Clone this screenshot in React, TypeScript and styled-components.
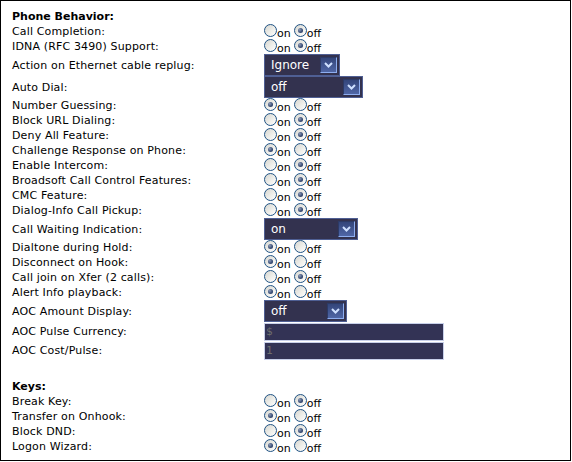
import { createGlobalStyle } from "styled-components";
import styled from "styled-components";

const GlobalStyle = createGlobalStyle`
  body {
    margin: 0;
    background: #ffffff;
  }
`;

const Panel = styled.div`
  box-sizing: border-box;
  width: 571px;
  height: 461px;
  border: 1px solid #000000;
  padding: 8px 0 0 11px;
  font-family: "DejaVu Sans", Verdana, sans-serif;
  font-size: 11px;
  letter-spacing: 0.15px;
  color: #000000;
  background: #ffffff;
`;

const Heading = styled.div<{ $gap?: number }>`
  height: 15px;
  line-height: 15px;
  font-weight: bold;
  letter-spacing: 0;
  margin-top: ${props => props.$gap ?? 0}px;
`;

const Row = styled.div<{ $height: number }>`
  display: grid;
  grid-template-columns: 252px 1fr;
  align-items: center;
  height: ${props => props.$height}px;
`;

const Label = styled.span`
  white-space: nowrap;
  line-height: 15px;
`;

const RadioGroup = styled.div`
  display: flex;
  align-items: center;
  height: 15px;
  letter-spacing: 0;
`;

const Choice = styled.label`
  display: flex;
  align-items: center;
  margin-right: 3px;
  line-height: 15px;
`;

const RadioDot = styled.span<{ $checked: boolean }>`
  position: relative;
  box-sizing: border-box;
  display: inline-block;
  width: 13px;
  height: 13px;
  border-radius: 50%;
  border: 1px solid #1f5283;
  background: linear-gradient(135deg, #d6d6d0 0%, #eeeeea 55%, #ffffff 100%);
  margin-top: -2px;

  &::after {
    content: "";
    display: ${props => (props.$checked ? "block" : "none")};
    position: absolute;
    left: 3px;
    top: 3px;
    width: 5px;
    height: 5px;
    border-radius: 50%;
    background: radial-gradient(circle at 35% 35%, #8c9ab8 0%, #3a4f78 55%, #1e2f52 100%);
  }
`;

const ChoiceText = styled.span`
  padding-top: 3px;
`;

const Dropdown = styled.div<{ $width: number }>`
  box-sizing: border-box;
  display: flex;
  align-items: center;
  justify-content: space-between;
  width: ${props => props.$width}px;
  height: 22px;
  border: 1px solid #4f5f94;
  background: #33324f;
  color: #ffffff;
  font-size: 12px;
  letter-spacing: 0;
  padding: 0 2px 0 6px;
`;

const ArrowBox = styled.span`
  box-sizing: border-box;
  display: flex;
  align-items: center;
  justify-content: center;
  width: 17px;
  height: 16px;
  background: linear-gradient(#33457a, #4f66a6);
  border-top: 1px solid #2c3a66;
  border-left: 1px solid #2c3a66;
  border-right: 1px solid #8eaef0;
  border-bottom: 1px solid #8eaef0;
`;

const TextField = styled.div`
  box-sizing: border-box;
  width: 180px;
  height: 18px;
  border: 1px solid #c8d0ea;
  background: #333355;
  color: #6e6e6e;
  font-family: "DejaVu Sans Mono", monospace;
  font-size: 11px;
  letter-spacing: 0;
  line-height: 16px;
  padding-left: 1px;
`;

type Item =
  | { kind: "radio"; label: string; on: boolean }
  | { kind: "select"; label: string; value: string; width: number }
  | { kind: "input"; label: string; placeholder: string };

const phoneBehavior: Item[] = [
  { kind: "radio", label: "Call Completion:", on: false },
  { kind: "radio", label: "IDNA (RFC 3490) Support:", on: false },
  { kind: "select", label: "Action on Ethernet cable replug:", value: "Ignore", width: 76 },
  { kind: "select", label: "Auto Dial:", value: "off", width: 99 },
  { kind: "radio", label: "Number Guessing:", on: true },
  { kind: "radio", label: "Block URL Dialing:", on: false },
  { kind: "radio", label: "Deny All Feature:", on: false },
  { kind: "radio", label: "Challenge Response on Phone:", on: true },
  { kind: "radio", label: "Enable Intercom:", on: false },
  { kind: "radio", label: "Broadsoft Call Control Features:", on: false },
  { kind: "radio", label: "CMC Feature:", on: false },
  { kind: "radio", label: "Dialog-Info Call Pickup:", on: false },
  { kind: "select", label: "Call Waiting Indication:", value: "on", width: 94 },
  { kind: "radio", label: "Dialtone during Hold:", on: true },
  { kind: "radio", label: "Disconnect on Hook:", on: true },
  { kind: "radio", label: "Call join on Xfer (2 calls):", on: false },
  { kind: "radio", label: "Alert Info playback:", on: true },
  { kind: "select", label: "AOC Amount Display:", value: "off", width: 83 },
  { kind: "input", label: "AOC Pulse Currency:", placeholder: "$" },
  { kind: "input", label: "AOC Cost/Pulse:", placeholder: "1" },
];

const keys: Item[] = [
  { kind: "radio", label: "Break Key:", on: false },
  { kind: "radio", label: "Transfer on Onhook:", on: true },
  { kind: "radio", label: "Block DND:", on: false },
  { kind: "radio", label: "Logon Wizard:", on: true },
];

const Chevron = () => (
  <svg width="9" height="6" viewBox="0 0 9 6">
    <polyline points="1,1 4.5,4.5 8,1" fill="none" stroke="#cfe0ff" strokeWidth="2" />
  </svg>
);

const OnOff = ({ on }: { on: boolean }) => (
  <RadioGroup>
    <Choice>
      <RadioDot $checked={on} />
      <ChoiceText>on</ChoiceText>
    </Choice>
    <Choice>
      <RadioDot $checked={!on} />
      <ChoiceText>off</ChoiceText>
    </Choice>
  </RadioGroup>
);

const Field = ({ item }: { item: Item }) => {
  if (item.kind === "radio") {
    return (
      <Row $height={15}>
        <Label>{item.label}</Label>
        <OnOff on={item.on} />
      </Row>
    );
  }
  if (item.kind === "select") {
    return (
      <Row $height={22}>
        <Label>{item.label}</Label>
        <Dropdown $width={item.width}>
          <span>{item.value}</span>
          <ArrowBox>
            <Chevron />
          </ArrowBox>
        </Dropdown>
      </Row>
    );
  }
  return (
    <Row $height={19}>
      <Label>{item.label}</Label>
      <TextField>{item.placeholder}</TextField>
    </Row>
  );
};

const App = () => {
  return (
    <>
      <GlobalStyle />
      <Panel>
        <Heading>Phone Behavior:</Heading>
        {phoneBehavior.map(item => (
          <Field key={item.label} item={item} />
        ))}
        <Heading $gap={19}>Keys:</Heading>
        {keys.map(item => (
          <Field key={item.label} item={item} />
        ))}
      </Panel>
    </>
  );
};

export default App;
